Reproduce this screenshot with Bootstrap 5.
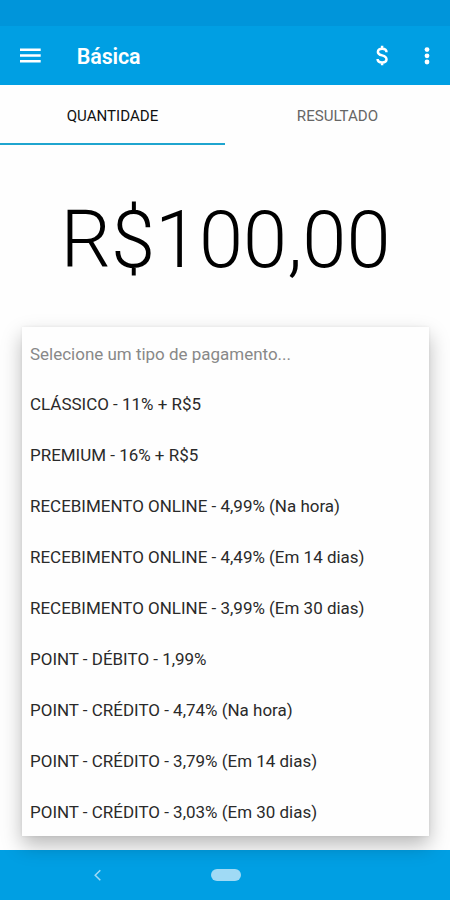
<!DOCTYPE html>
<html lang="pt-BR">
<head>
<meta charset="utf-8">
<meta name="viewport" content="width=device-width, initial-scale=1">
<title>Básica</title>
<link href="https://cdn.jsdelivr.net/npm/bootstrap@5.3.0/dist/css/bootstrap.min.css" rel="stylesheet">
<style>
  body { font-family: Roboto, sans-serif; background: #fefefe; color: #111; }
  .screen { height: 900px; width: 450px; }
  .status-strip { height: 26px; background: #0095da; }
  .app-bar { height: 59px; background: #009fe3; padding: 0 17px 0 18px; }
  .app-title { font-size: 21.4px; font-weight: 600; line-height: 1; margin-left: 34.8px; padding-top: 2px; letter-spacing: -.1px; }
  .tab-strip { height: 60px; }
  .tab-strip .nav-link { border-radius: 0; font-size: 15.1px; line-height: 20px; color: #666; padding: 21px 0 17px; border-bottom: 2px solid transparent; }
  .tab-strip .nav-link.active { color: #111; border-bottom-color: #1fa5cf; }
  .amount { font-size: 79.4px; font-weight: 300; line-height: 94px; color: #000; margin-top: 48px; padding-left: 1px; white-space: nowrap; }
  .pay-menu { margin: 40.4px 21px 0 22px; z-index: 2; box-shadow: 0 9px 19px rgba(0,0,0,.27), 0 0 3px rgba(0,0,0,.07); }
  .pay-menu .list-group-item { height: 50.9px; padding: 2.4px 8px 0; font-size: 16.98px; line-height: 1; color: #2a2a2a; border: 0; background: #fefefe; white-space: nowrap; }
  .pay-menu .prompt { color: #888; }
  .system-bar { height: 50px; background: #009fe3; }
  .home-pill { width: 30px; height: 12px; background: #a0daf5; margin-left: 108px; }
</style>
<script src="https://cdn.jsdelivr.net/npm/bootstrap@5.3.0/dist/js/bootstrap.bundle.min.js"></script>
</head>
<body>
<div class="screen d-flex flex-column overflow-hidden">
  <div class="status-strip flex-shrink-0"></div>
  <header class="app-bar d-flex align-items-center text-white flex-shrink-0">
    <svg width="24" height="20" viewBox="0 0 24 20" fill="#fff" aria-label="Menu"><path d="M2 2.4h20.7v2.6H2zM2 8.2h20.7v2.6H2zM2 14h20.7v2.6H2z"/></svg>
    <h1 class="app-title mb-0">Básica</h1>
    <svg class="ms-auto" width="14" height="22" viewBox="0 0 14 22" fill="none" stroke="#fff" stroke-width="2.5" aria-label="Moeda"><path d="M11.5 7.3C11.5 5 9.7 3.7 7.1 3.7C4.5 3.7 2.9 5 2.9 6.9C2.9 9.1 4.8 9.8 7.1 10.4C9.6 11.1 11.5 11.9 11.5 14.2C11.5 16.3 9.6 17.4 7.2 17.4C4.5 17.4 2.6 16.1 2.6 13.9M7.1 .8v3M7.1 17.3v3"/></svg>
    <svg class="ms-4" width="20" height="20" viewBox="0 0 20 20" fill="#fff" aria-label="Mais"><circle cx="14" cy="3.6" r="2.4"/><circle cx="14" cy="9.8" r="2.4"/><circle cx="14" cy="16" r="2.4"/></svg>
  </header>
  <nav class="tab-strip nav nav-justified flex-shrink-0">
    <a class="nav-link active" href="#">QUANTIDADE</a>
    <a class="nav-link" href="#">RESULTADO</a>
  </nav>
  <div class="amount text-center">R$100,00</div>
  <div class="pay-menu list-group rounded-0 position-relative">
    <div class="list-group-item prompt d-flex align-items-center">Selecione um tipo de pagamento...</div>
    <div class="list-group-item d-flex align-items-center">CLÁSSICO - 11% + R$5</div>
    <div class="list-group-item d-flex align-items-center">PREMIUM - 16% + R$5</div>
    <div class="list-group-item d-flex align-items-center">RECEBIMENTO ONLINE - 4,99% (Na hora)</div>
    <div class="list-group-item d-flex align-items-center">RECEBIMENTO ONLINE - 4,49% (Em 14 dias)</div>
    <div class="list-group-item d-flex align-items-center">RECEBIMENTO ONLINE - 3,99% (Em 30 dias)</div>
    <div class="list-group-item d-flex align-items-center">POINT - DÉBITO - 1,99%</div>
    <div class="list-group-item d-flex align-items-center">POINT - CRÉDITO - 4,74% (Na hora)</div>
    <div class="list-group-item d-flex align-items-center">POINT - CRÉDITO - 3,79% (Em 14 dias)</div>
    <div class="list-group-item d-flex align-items-center">POINT - CRÉDITO - 3,03% (Em 30 dias)</div>
  </div>
  <footer class="system-bar mt-auto d-flex align-items-center flex-shrink-0">
    <svg width="103" height="14" viewBox="0 0 103 14" fill="none" stroke="#a0daf5" stroke-width="1.5" aria-label="Voltar"><path d="M100.3 2.2L95.2 7.2L100.3 12.2"/></svg>
    <div class="home-pill rounded-pill"></div>
  </footer>
</div>
</body>
</html>
